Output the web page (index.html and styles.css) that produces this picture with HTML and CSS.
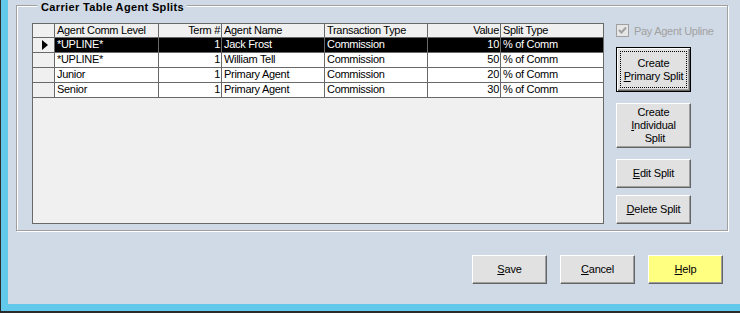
FILE: index.html
```html
<!DOCTYPE html>
<html lang="en">
<head>
    <meta charset="UTF-8">
    <title>Carrier Table Agent Splits</title>
    <link rel="stylesheet" href="styles.css">
</head>
<body>
    <div class="window">
        <div class="content">
            <div class="group">
                <div class="group-title">Carrier Table Agent Splits</div>
                <div class="group-body">
                    <div class="grid">
                        <div class="row head">
                            <div class="cell sel"></div>
                            <div class="cell">Agent Comm Level</div>
                            <div class="cell num">Term #</div>
                            <div class="cell">Agent Name</div>
                            <div class="cell">Transaction Type</div>
                            <div class="cell num">Value</div>
                            <div class="cell">Split Type</div>
                        </div>
                        <div class="row current">
                            <div class="cell sel"><span class="arrow"></span></div>
                            <div class="cell">*UPLINE*</div>
                            <div class="cell num">1</div>
                            <div class="cell">Jack Frost</div>
                            <div class="cell">Commission</div>
                            <div class="cell num">10</div>
                            <div class="cell">% of Comm</div>
                        </div>
                        <div class="row">
                            <div class="cell sel"></div>
                            <div class="cell">*UPLINE*</div>
                            <div class="cell num">1</div>
                            <div class="cell">William Tell</div>
                            <div class="cell">Commission</div>
                            <div class="cell num">50</div>
                            <div class="cell">% of Comm</div>
                        </div>
                        <div class="row">
                            <div class="cell sel"></div>
                            <div class="cell">Junior</div>
                            <div class="cell num">1</div>
                            <div class="cell">Primary Agent</div>
                            <div class="cell">Commission</div>
                            <div class="cell num">20</div>
                            <div class="cell">% of Comm</div>
                        </div>
                        <div class="row">
                            <div class="cell sel"></div>
                            <div class="cell">Senior</div>
                            <div class="cell num">1</div>
                            <div class="cell">Primary Agent</div>
                            <div class="cell">Commission</div>
                            <div class="cell num">30</div>
                            <div class="cell">% of Comm</div>
                        </div>
                    </div>

                    <div class="side">
                        <label class="check">
                            <svg width="13" height="13" viewBox="0 0 13 13">
                                <rect x="0.5" y="0.5" width="12" height="12" fill="#e6e6e6" stroke="#a0a0a0"/>
                                <polyline points="3,6 5.5,8.5 10,3.5" fill="none" stroke="#a0a0a0" stroke-width="2"/>
                            </svg>
                            <span>Pay Agent Upline</span>
                        </label>
                        <button class="btn tall default">Create<br><u>P</u>rimary Split</button>
                        <button class="btn tall second">Create<br><u>I</u>ndividual<br>&nbsp;Split</button>
                        <button class="btn edit"><u>E</u>dit Split</button>
                        <button class="btn del"><u>D</u>elete Split</button>
                    </div>
                </div>
            </div>

            <div class="actions">
                <button class="btn"><u>S</u>ave</button>
                <button class="btn"><u>C</u>ancel</button>
                <button class="btn help"><u>H</u>elp</button>
            </div>
        </div>
    </div>
</body>
</html>
```

FILE: styles.css
```css
* {
    margin: 0;
    padding: 0;
    box-sizing: border-box;
    font-family: 'Liberation Sans', Arial, sans-serif;
}

body {
    width: 740px;
    height: 313px;
    overflow: hidden;
}

.window {
    height: 313px;
    background: #63c9ea;
    border-left: 1px solid #2b2b2b;
    border-bottom: 2px solid #2b2b2b;
    padding: 0 0 7px 7px;
}

.content {
    height: 304px;
    background: #d0dae6;
    padding: 5px 0 0 8px;
}

/* group box */
.group {
    width: 712px;
    height: 226px;
    border: 1px solid #a0a0a0;
    box-shadow: inset 1px 1px 0 #fff, 1px 1px 0 #fff;
    padding-left: 15px;
}

.group-title {
    width: fit-content;
    margin: -6px 0 0 5px;
    padding: 0 3px 0 4px;
    background: #d0dae6;
    font-size: 11px;
    font-weight: bold;
    letter-spacing: 0.35px;
    line-height: 14px;
    color: #000;
}

.group-body {
    display: flex;
    gap: 12px;
    margin-top: 9px;
}

/* datasheet */
.grid {
    width: 572px;
    height: 201px;
    border: 1px solid #696969;
    background: #f0f0f0;
}

.row {
    display: grid;
    grid-template-columns: 22px 104px 63px 103px 103px 73px 102px;
    height: 15px;
    background: #fff;
}

.row.head {
    height: 14px;
    background: #f0f0f0;
}

.cell {
    border-right: 1px solid #696969;
    border-bottom: 1px solid #696969;
    padding: 0 2px;
    font-size: 11px;
    letter-spacing: -0.3px;
    line-height: 13px;
    white-space: nowrap;
    overflow: hidden;
    color: #000;
}

.cell:last-child {
    border-right: none;
}

.cell.num {
    text-align: right;
    padding-right: 1px;
}

.cell.sel {
    background: #f0f0f0;
}

.row.current .cell {
    background: #000;
    color: #fff;
}

.row.current .cell.sel {
    background: #f0f0f0;
}

.arrow {
    display: block;
    width: 0;
    height: 0;
    margin: 2px 0 0 7px;
    border-left: 6px solid #000;
    border-top: 5px solid transparent;
    border-bottom: 5px solid transparent;
}

/* right column */
.side {
    width: 110px;
    display: flex;
    flex-direction: column;
    align-items: flex-start;
}

.check {
    display: flex;
    align-items: center;
    gap: 5px;
    height: 13px;
    margin-top: 1px;
    font-size: 11px;
    letter-spacing: -0.3px;
    color: #a0a0a0;
    white-space: nowrap;
}

.check svg {
    display: block;
}

.btn {
    width: 75px;
    height: 29px;
    background: #e1e1e1;
    border: 1px solid;
    border-color: #fff #646464 #646464 #fff;
    box-shadow: inset -1px -1px 0 #a0a0a0;
    font-size: 11px;
    letter-spacing: -0.2px;
    line-height: 13px;
    color: #000;
    text-align: center;
}

.btn u {
    text-decoration: underline;
    text-underline-offset: 1px;
}

.btn.tall {
    height: 45px;
}

.btn.default {
    margin-top: 10px;
    border: 1px solid #000;
    box-shadow: inset 1px 1px 0 #fff, inset -1px -1px 0 #646464, inset -2px -2px 0 #a0a0a0;
    outline: 1px dotted #000;
    outline-offset: -5px;
}

.btn.second {
    margin-top: 11px;
}

.btn.edit {
    margin-top: 11px;
}

.btn.del {
    margin-top: 7px;
}

/* bottom buttons */
.actions {
    display: flex;
    justify-content: flex-end;
    gap: 13px;
    margin-top: 24px;
    padding-right: 17px;
}

.btn.help {
    background: #ffff80;
}
```
